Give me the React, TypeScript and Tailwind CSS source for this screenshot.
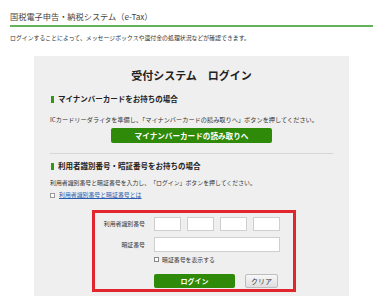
import React from "react";

export default function App() {
  return (
    <div
      className="w-[379px] h-[296px] overflow-hidden bg-white text-[#333]"
      style={{ fontFamily: '"Noto Sans CJK JP", "Noto Sans", sans-serif' }}
    >
      <div className="pl-[10px] pr-[6px] pt-[10px]">
        <div className="h-[12px] text-[8.2px] leading-[12px] whitespace-nowrap text-[#444]">
          国税電子申告・納税システム（e-Tax）
        </div>
        <div className="mt-[3px] h-[2px] bg-[#62b35a]" />
        <div className="mt-[8px] h-[6px] text-[5.9px] leading-[6px] whitespace-nowrap">
          ログインすることによって、メッセージボックスや還付金の処理状況などが確認できます。
        </div>
      </div>

      <div className="ml-[34px] mt-[15px] w-[315px] h-[260px] bg-[#efefef] px-[16px] pt-[12px]">
        <div className="h-[14px] text-center text-[11px] leading-[14px] font-bold text-[#222] whitespace-nowrap">
          受付システム　ログイン
        </div>

        <div className="mt-[12px] flex h-[10px] items-center gap-[4px]">
          <div className="ml-[1px] h-[7px] w-[3px] bg-[#2e9a14]" />
          <div className="text-[7.5px] leading-[10px] font-bold text-[#222] whitespace-nowrap">
            マイナンバーカードをお持ちの場合
          </div>
        </div>

        <div className="mt-[12px] h-[8px] text-[6.2px] leading-[8px] whitespace-nowrap">
          ICカードリーダライタを準備し、「マイナンバーカードの読み取りへ」ボタンを押してください。
        </div>

        <div className="mt-[4px] flex justify-center">
          <div className="flex h-[15px] w-[161px] items-center justify-center rounded-[2px] bg-[#2f8a0a] text-[7.6px] font-bold text-white whitespace-nowrap">
            マイナンバーカードの読み取りへ
          </div>
        </div>

        <div className="mt-[10px] h-[1px] bg-[#d6d6d6]" />

        <div className="mt-[7px] flex h-[10px] items-center gap-[4px]">
          <div className="ml-[1px] h-[7px] w-[3px] bg-[#2e9a14]" />
          <div className="text-[7.5px] leading-[10px] font-bold text-[#222] whitespace-nowrap">
            利用者識別番号・暗証番号をお持ちの場合
          </div>
        </div>

        <div className="mt-[8px] h-[8px] text-[5.9px] leading-[8px] whitespace-nowrap">
          利用者識別番号と暗証番号を入力し、「ログイン」ボタンを押してください。
        </div>

        <div className="mt-[4px] flex h-[8px] items-center gap-[4px]">
          <div className="h-[5px] w-[5px] border border-[#999] bg-white" />
          <span className="text-[5.9px] leading-[8px] text-[#2a5db0] underline whitespace-nowrap">
            利用者識別番号と暗証番号とは
          </span>
        </div>

        <div className="ml-[42px] mt-[11px] w-[204px] border-[3px] border-[#e1262d] pt-[4px] pb-[1px]">
          <div className="flex h-[14px] items-center">
            <div className="w-[50px] text-right text-[5.9px] leading-[8px] whitespace-nowrap">
              利用者識別番号
            </div>
            <div className="ml-[9px] flex gap-[6px]">
              <div className="h-[14px] w-[27px] border border-[#cfcfcf] bg-white" />
              <div className="h-[14px] w-[27px] border border-[#cfcfcf] bg-white" />
              <div className="h-[14px] w-[27px] border border-[#cfcfcf] bg-white" />
              <div className="h-[14px] w-[27px] border border-[#cfcfcf] bg-white" />
            </div>
          </div>

          <div className="mt-[6px] flex h-[15px] items-center">
            <div className="w-[50px] text-right text-[5.9px] leading-[8px] whitespace-nowrap">
              暗証番号
            </div>
            <div className="ml-[9px] h-[15px] w-[126px] border border-[#cfcfcf] bg-white" />
          </div>

          <div className="mt-[4px] flex h-[7px] items-center">
            <div className="ml-[59px] h-[5px] w-[5px] border border-[#888] bg-white" />
            <div className="ml-[3px] text-[5.9px] leading-[7px] whitespace-nowrap">
              暗証番号を表示する
            </div>
          </div>

          <div className="mt-[11px] flex h-[14px] items-center">
            <div className="ml-[59px] flex h-[14px] w-[81px] items-center justify-center rounded-[2px] bg-[#2f8a0a] text-[7px] font-bold text-white whitespace-nowrap">
              ログイン
            </div>
            <div className="ml-[10px] flex h-[14px] w-[33px] items-center justify-center rounded-[2px] border border-[#bdbdbd] bg-gradient-to-b from-[#f8f8f8] to-[#dedede] text-[7px] text-[#333] whitespace-nowrap">
              クリア
            </div>
          </div>
        </div>
      </div>
    </div>
  );
}
